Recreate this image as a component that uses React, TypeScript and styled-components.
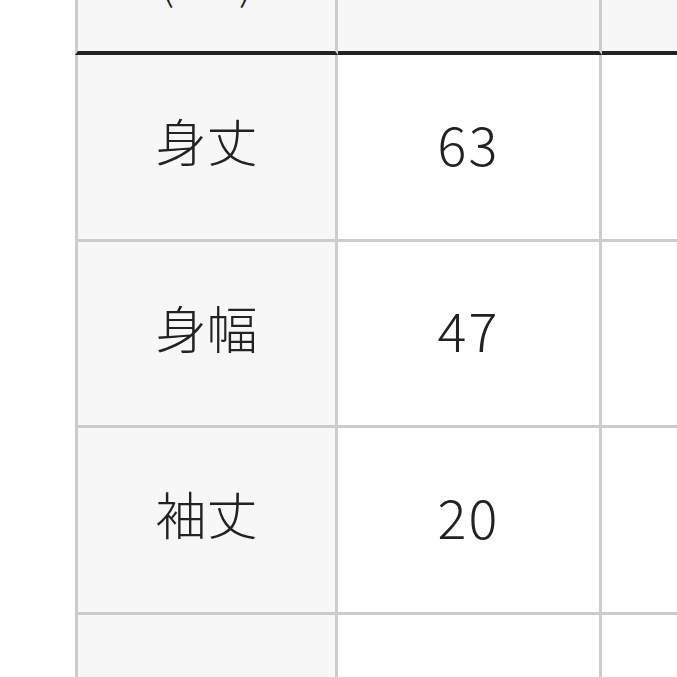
import React from "react";
import styled, { createGlobalStyle } from "styled-components";

const Global = createGlobalStyle`
  html, body { margin: 0; padding: 0; background: #ffffff; overflow: hidden; }
  body { font-family: "Noto Sans CJK JP", "Noto Sans", sans-serif; color: #222; }
`;

const Page = styled.div`
  width: 677px;
  height: 677px;
  overflow: hidden;
  padding-left: 75px;
  box-sizing: border-box;
`;

const Table = styled.table`
  border-collapse: separate;
  border-spacing: 0;
  table-layout: fixed;
  width: 791px;
  min-width: 791px;
  margin-top: -135px;
`;

const HeadCell = styled.th<{ $first?: boolean; $w: number }>`
  width: ${(p) => p.$w}px;
  height: 190px;
  padding: 0 0 16px 0;
  background: #f7f7f7;
  border-right: 3px solid #cccccc;
  border-left: ${(p) => (p.$first ? "3px solid #cccccc" : "none")};
  border-bottom: 4px solid #222222;
  font-weight: 300;
  font-size: 46px;
  line-height: 58px;
  text-align: center;
  vertical-align: middle;
  box-sizing: border-box;
`;

const LabelCell = styled.td`
  box-sizing: border-box;
  height: 186.5px;
  padding: 0 0 12px 0;
  background: #f7f7f7;
  border-left: 3px solid #cccccc;
  border-right: 3px solid #cccccc;
  border-bottom: 3px solid #cccccc;
  text-align: center;
  vertical-align: middle;
  font-size: 51px;
  font-weight: 300;
  line-height: 1;
`;

const ValueCell = styled.td`
  box-sizing: border-box;
  height: 186.5px;
  padding: 0 0 8px 0;
  background: #ffffff;
  border-right: 3px solid #cccccc;
  border-bottom: 3px solid #cccccc;
  text-align: center;
  vertical-align: middle;
  font-size: 54px;
  font-weight: 300;
  line-height: 1;
  letter-spacing: 2px;
`;

const rows = [
  { label: "身丈", value: "63" },
  { label: "身幅", value: "47" },
  { label: "袖丈", value: "20" },
  { label: "肩幅", value: "42" },
];

export default function App() {
  return (
    <>
      <Global />
      <Page>
        <Table>
          <thead>
            <tr>
              <HeadCell $first $w={263}>
                サイズ
                <br />
                (cm)
              </HeadCell>
              <HeadCell $w={264}>F</HeadCell>
              <HeadCell $w={264}>M</HeadCell>
            </tr>
          </thead>
          <tbody>
            {rows.map((r) => (
              <tr key={r.label}>
                <LabelCell>{r.label}</LabelCell>
                <ValueCell>{r.value}</ValueCell>
                <ValueCell></ValueCell>
              </tr>
            ))}
          </tbody>
        </Table>
      </Page>
    </>
  );
}
